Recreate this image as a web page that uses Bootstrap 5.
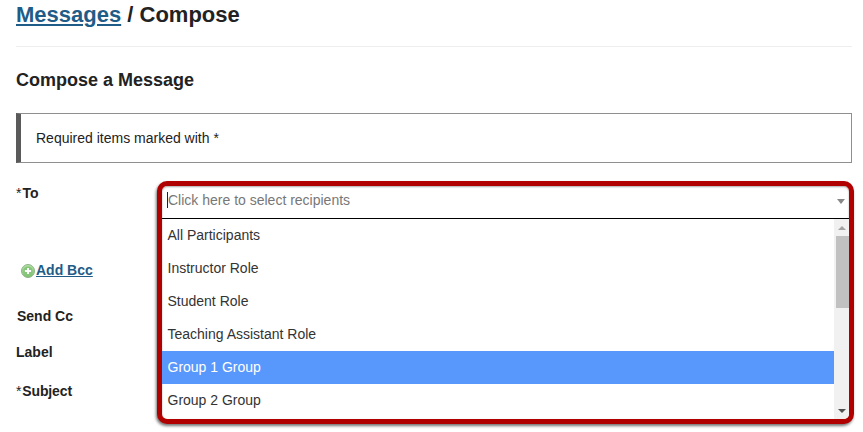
<!DOCTYPE html>
<html lang="en">
<head>
  <meta charset="UTF-8">
  <title>Compose</title>
  <link rel="stylesheet" href="https://cdn.jsdelivr.net/npm/bootstrap@5.3.0/dist/css/bootstrap.min.css">
  <style>
    html, body { height: 432px; overflow: hidden; }
    body { font-family: "Liberation Sans", Arial, sans-serif; font-size: 14px; color: #222; background: #fff; }
    a { color: #1f5c87; }
    .page-wrap { padding: 0 11px 0 16px; }
    .page-title { font-size: 22px; line-height: 30px; font-weight: 700; margin: 0; height: 46px; border-bottom: 1px solid #eee; box-sizing: content-box; }
    .sub-title { font-size: 18px; line-height: 22px; font-weight: 700; margin: 22px 0 22px; }
    .req-note { height: 50px; border: 1px solid #8f8f8f; border-left: 5px solid #5a5a5a; padding-left: 15px; line-height: 48px; font-size: 14px; }
    .form-area { margin-top: 18px; }
    .label-col { width: 141px; flex: none; font-weight: 700; font-size: 14px; line-height: 18px; }
    .star { font-weight: 400; margin-right: 1px; }
    .lbl-to { margin-top: 3px; }
    .lbl-bcc { margin: 59px 0 0 5px; height: 18px; }
    .lbl-bcc svg { vertical-align: -3px; margin-right: 1px; }
    .lbl-cc { margin: 28px 0 0 1px; }
    .lbl-label { margin-top: 18px; }
    .lbl-subject { margin-top: 21px; letter-spacing: -.01em; }
    .callout-box { width: 697px; height: 243px; margin-right: -9px; border: 5px solid #b00000; border-radius: 10px; box-shadow: -1px 2px 3px rgba(0,0,0,.55), inset 0 1px 2px rgba(0,0,0,.35); overflow: hidden; background: #fff; flex: none; }
    .pick-input { height: 33px; border-bottom: 1px solid #000; padding: 0 5px 4px; color: #777; }
    .pick-input .caret-bar { display: inline-block; width: 1px; height: 16px; background: #222; vertical-align: -3px; }
    .tri-down { width: 0; height: 0; border-left: 4px solid transparent; border-right: 4px solid transparent; border-top: 5px solid #888; margin: 2px -1px 0 0; }
    .opt-list { height: 200px; }
    .opt-item { height: 33px; line-height: 33px; padding-left: 5.5px; color: #333; }
    .opt-item.is-on { background: #5897fb; color: #fff; }
    .scroll-track { width: 15px; flex: none; background: #f1f1f1; }
    .scroll-thumb { height: 72px; margin-left: 2px; background: #c1c1c1; }
    .tri-up-s { width: 0; height: 0; border-left: 4px solid transparent; border-right: 4px solid transparent; border-bottom: 4px solid #a3a3a3; }
    .tri-down-s { width: 0; height: 0; border-left: 4px solid transparent; border-right: 4px solid transparent; border-top: 4px solid #505050; }
    .scroll-cap { height: 17px; }
  </style>
</head>
<body>
  <div class="page-wrap">
    <h1 class="page-title"><a href="#">Messages</a> / Compose</h1>
    <h2 class="sub-title">Compose a Message</h2>
    <div class="req-note">Required items marked with *</div>

    <div class="form-area d-flex">
      <div class="label-col">
        <div class="lbl-to"><span class="star">*</span>To</div>
        <div class="lbl-bcc">
          <svg width="14" height="14" viewBox="0 0 14 14">
            <defs>
              <linearGradient id="plusFill" x1="0" y1="0" x2="0" y2="1">
                <stop offset="0" stop-color="#b5e0a9"/>
                <stop offset="1" stop-color="#7cc06e"/>
              </linearGradient>
            </defs>
            <circle cx="7" cy="7" r="6.5" fill="url(#plusFill)" stroke="#8fb388" stroke-width="1"/>
            <circle cx="7" cy="7" r="4.6" fill="#86c679"/>
            <path d="M7 3.9v6.2M3.9 7h6.2" stroke="#fff" stroke-width="2"/>
          </svg><a href="#">Add Bcc</a>
        </div>
        <div class="lbl-cc">Send Cc</div>
        <div class="lbl-label">Label</div>
        <div class="lbl-subject"><span class="star">*</span>Subject</div>
      </div>

      <div class="callout-box">
        <div class="pick-input d-flex align-items-center justify-content-between">
          <span><span class="caret-bar"></span>Click here to select recipients</span>
          <span class="tri-down"></span>
        </div>
        <div class="opt-list d-flex">
          <div class="flex-grow-1">
            <div class="opt-item">All Participants</div>
            <div class="opt-item">Instructor Role</div>
            <div class="opt-item">Student Role</div>
            <div class="opt-item">Teaching Assistant Role</div>
            <div class="opt-item is-on">Group 1 Group</div>
            <div class="opt-item">Group 2 Group</div>
          </div>
          <div class="scroll-track d-flex flex-column">
            <div class="scroll-cap d-flex align-items-center justify-content-center"><span class="tri-up-s"></span></div>
            <div class="scroll-thumb"></div>
            <div class="flex-grow-1"></div>
            <div class="scroll-cap d-flex align-items-center justify-content-center"><span class="tri-down-s"></span></div>
          </div>
        </div>
      </div>
    </div>
  </div>
  <script src="https://cdn.jsdelivr.net/npm/bootstrap@5.3.0/dist/js/bootstrap.bundle.min.js"></script>
</body>
</html>
